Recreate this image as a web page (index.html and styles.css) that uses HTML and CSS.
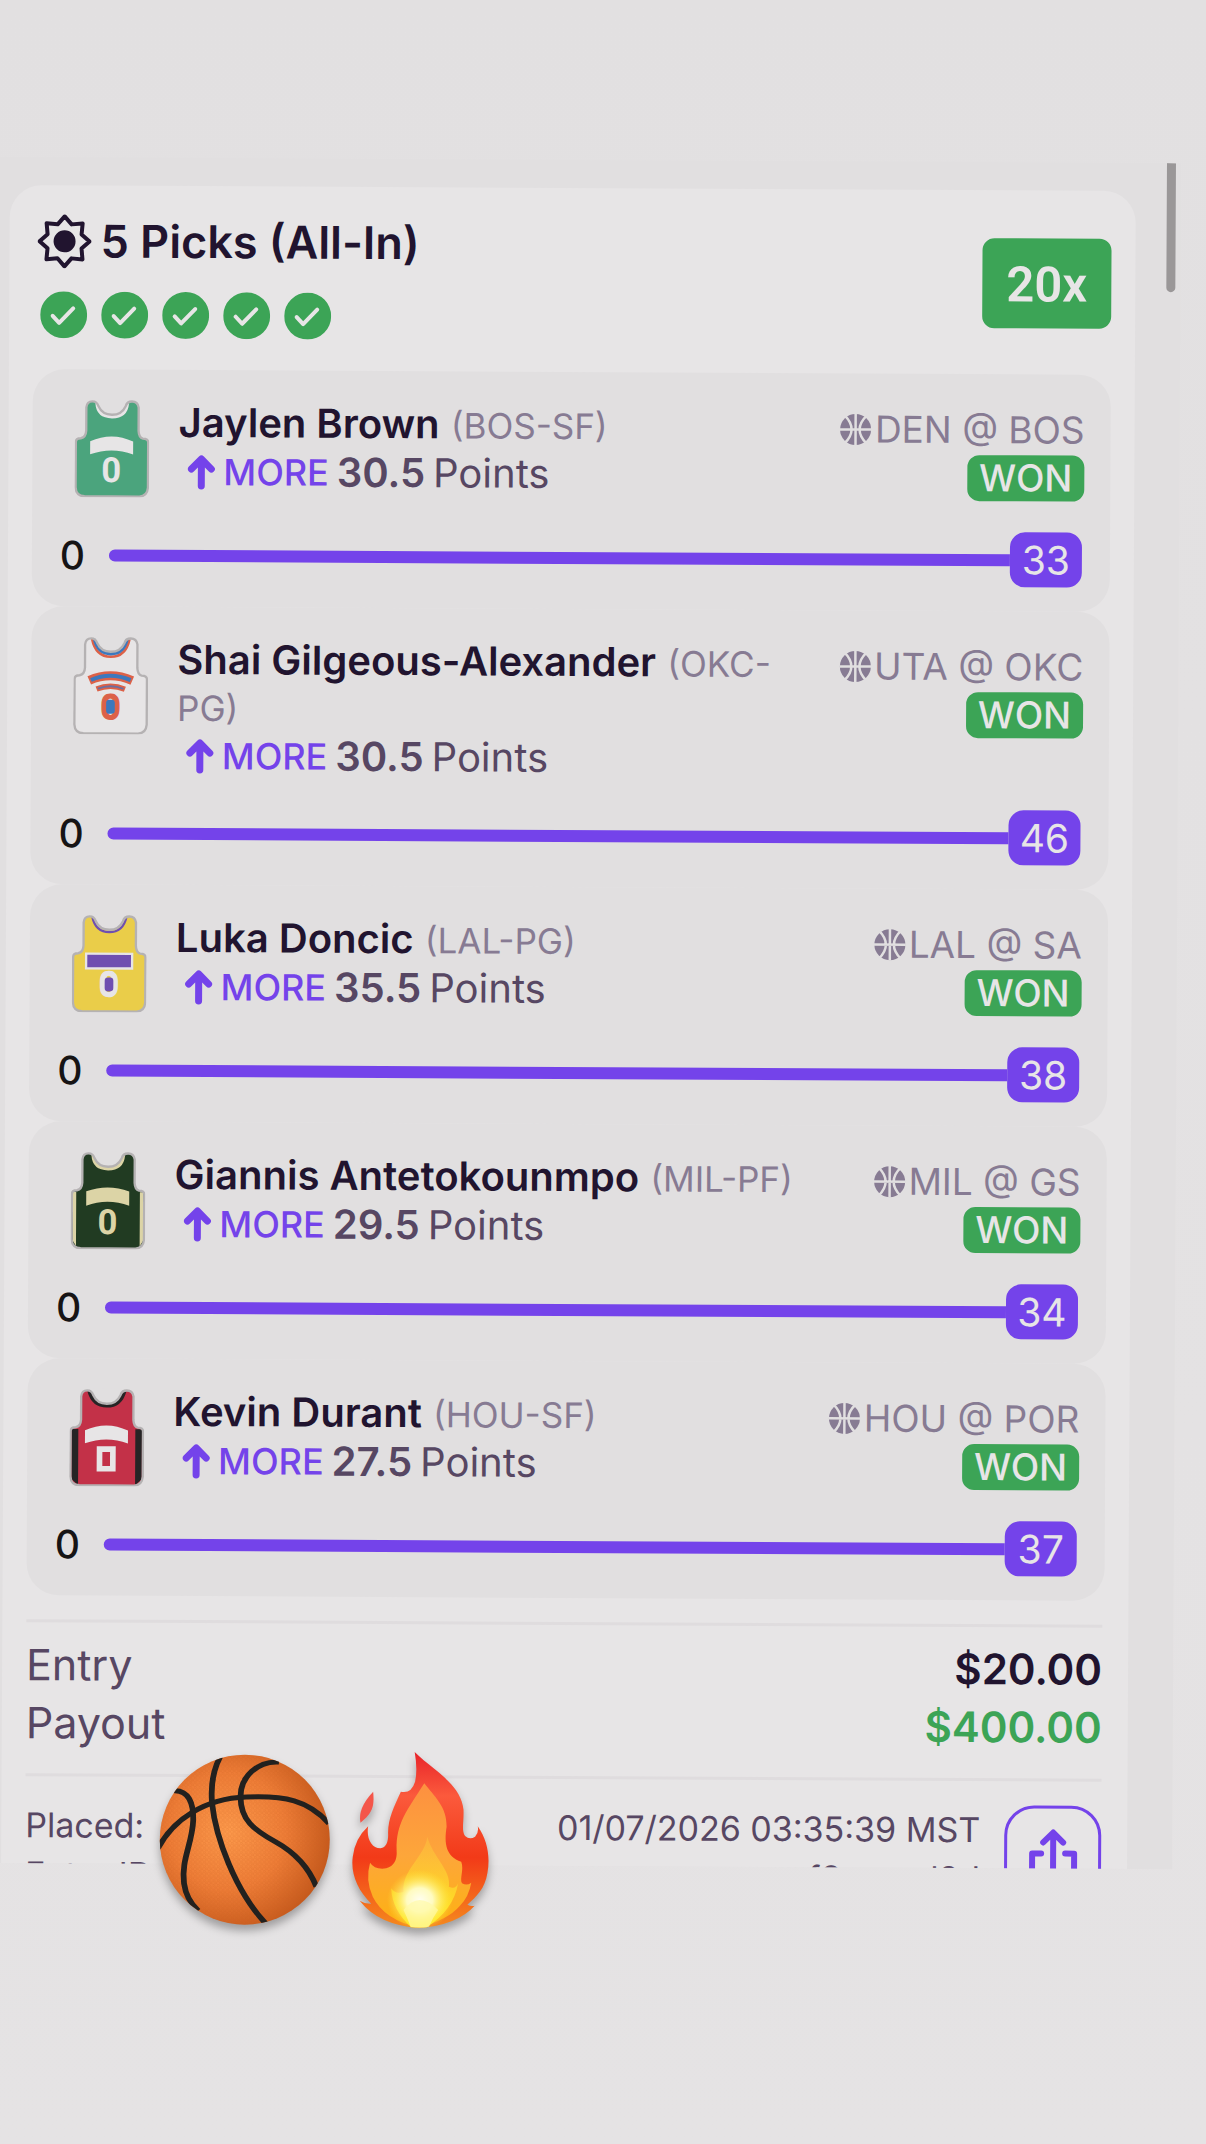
FILE: index.html
```html
<!DOCTYPE html>
<html lang="en">
<head>
  <meta charset="UTF-8">
  <meta name="viewport" content="width=device-width, initial-scale=1.0">
  <title>5 Picks (All-In)</title>
  <link rel="stylesheet" href="styles.css">
</head>
<body>
  <!-- shared icons -->
  <svg class="defs" aria-hidden="true">
    <symbol id="check" viewBox="0 0 47 47">
      <circle cx="23.5" cy="23.5" r="23.5" fill="#3ca456"/>
      <path d="M12.5 24.5l6.5 7L33 17" fill="none" stroke="#e7e5e6" stroke-width="4" stroke-linecap="round" stroke-linejoin="round"/>
    </symbol>
    <symbol id="ball" viewBox="0 0 32 32">
      <circle cx="16" cy="16" r="15.5" fill="#877b93"/>
      <path d="M16 0v32M0 16h32M5 2Q12 9 12 16T5 30M27 2Q20 9 20 16T27 30" fill="none" stroke="#e1dfe0" stroke-width="2.5"/>
    </symbol>
    <symbol id="up" viewBox="0 0 28 36">
      <path d="M14 32V6M4 15L14 5l10 10" fill="none" stroke="#7443ea" stroke-width="7" stroke-linecap="round" stroke-linejoin="round"/>
    </symbol>
    <symbol id="shirt" viewBox="45 57 225 293">
      <path d="M80 80Q82 62 98 62Q112 62 116 76Q128 102 157 102Q186 102 198 76Q202 62 217 62Q234 62 237 80V150Q238 170 250 173Q266 173 266 184V320Q264 346 240 347H76Q50 346 49 320V184Q49 173 64 173Q79 170 80 150Z"/>
    </symbol>
  </svg>

  <main class="frame">
    <article class="slip">
      <header class="slip-header">
        <div>
          <h1 class="title">
            <svg class="star" viewBox="-27 -27 54 54"><path d="M0-25L7-17L18-18L17-7L25 0L17 7L18 18L7 17L0 25L-7 17L-18 18L-17 7L-25 0L-17-7L-18-18L-7-17Z" fill="none" stroke="#21142f" stroke-width="4" stroke-linejoin="round"/><circle r="11" fill="#21142f"/></svg>
            5 Picks (All-In)
          </h1>
          <div class="checks">
            <svg><use href="#check"/></svg>
            <svg><use href="#check"/></svg>
            <svg><use href="#check"/></svg>
            <svg><use href="#check"/></svg>
            <svg><use href="#check"/></svg>
          </div>
        </div>
        <span class="multiplier">20x</span>
      </header>

      <section class="picks">
        <div class="pick">
          <div class="pick-top">
            <svg class="jersey" viewBox="45 57 225 293">
              <use href="#shirt" x="45" y="57" width="225" height="293" fill="#4ba47d"/>
              <path d="M107 68Q110 113 157 113Q204 113 208 68L198 64V76L157 102L116 76V64Z" fill="#e7e5e6"/>
              <path d="M92 182Q157 152 221 182V221Q157 197 92 221Z" fill="#e7e5e6"/>
              <text x="156" y="304" fill="#e7e5e6">0</text>
              <path class="neck" d="M112 62Q118 102 157 102T202 62V50H112Z"/>
              <use class="outline" href="#shirt" x="45" y="57" width="225" height="293"/>
            </svg>
            <div class="player">
              <p><b class="name">Jaylen Brown</b> <span class="team">(BOS-SF)</span></p>
              <p class="line"><svg class="arrow"><use href="#up"/></svg><span class="more">MORE</span> <b>30.5</b> Points</p>
            </div>
            <div class="game">
              <p><svg class="ball"><use href="#ball"/></svg>DEN @ BOS</p>
              <span class="won">WON</span>
            </div>
          </div>
          <div class="progress"><span class="zero">0</span><span class="track"></span><span class="score">33</span></div>
        </div>

        <div class="pick">
          <div class="pick-top">
            <svg class="jersey" viewBox="45 57 225 293">
              <use href="#shirt" x="45" y="57" width="225" height="293" fill="#e7e5e6"/>
              <path d="M101 64Q112 117 157 117T213 64" fill="none" stroke="#dc6148" stroke-width="8"/>
              <path d="M108 64Q118 108 157 108T206 64" fill="none" stroke="#3c78bd" stroke-width="10"/>
              <path d="M93 188Q157 160 222 188" fill="none" stroke="#dc6148" stroke-width="27"/>
              <path d="M98 187Q157 161 217 187" fill="none" stroke="#3c78bd" stroke-width="12"/>
              <path d="M115 214Q157 197 200 214" fill="none" stroke="#dc6148" stroke-width="16"/>
              <path d="M119 213Q157 198 196 213" fill="none" stroke="#6d6ea0" stroke-width="6"/>
              <text x="157" y="304" fill="#dc6148" stroke="#dc6148" stroke-width="4">0</text>
              <rect x="144" y="246" width="26" height="42" rx="10" fill="#3c78bd"/>
              <path class="neck" d="M112 62Q118 102 157 102T202 62V50H112Z"/>
              <use class="outline" href="#shirt" x="45" y="57" width="225" height="293"/>
            </svg>
            <div class="player">
              <p><b class="name">Shai Gilgeous-Alexander</b> <span class="team">(OKC-PG)</span></p>
              <p class="line"><svg class="arrow"><use href="#up"/></svg><span class="more">MORE</span> <b>30.5</b> Points</p>
            </div>
            <div class="game">
              <p><svg class="ball"><use href="#ball"/></svg>UTA @ OKC</p>
              <span class="won">WON</span>
            </div>
          </div>
          <div class="progress"><span class="zero">0</span><span class="track"></span><span class="score">46</span></div>
        </div>

        <div class="pick">
          <div class="pick-top">
            <svg class="jersey" viewBox="45 57 225 293">
              <use href="#shirt" x="45" y="57" width="225" height="293" fill="#eacd49"/>
              <path d="M106 64Q116 109 157 109T208 64" fill="none" stroke="#6f4fb0" stroke-width="7"/>
              <rect x="88" y="174" width="138" height="44" fill="#6f4fb0" stroke="#e7e5e6" stroke-width="7"/>
              <text x="157" y="302" fill="#e7e5e6" stroke="#e7e5e6" stroke-width="4">0</text>
              <rect x="144" y="245" width="26" height="42" rx="10" fill="#6f4fb0"/>
              <path class="neck" d="M112 62Q118 102 157 102T202 62V50H112Z"/>
              <use class="outline" href="#shirt" x="45" y="57" width="225" height="293"/>
            </svg>
            <div class="player">
              <p><b class="name">Luka Doncic</b> <span class="team">(LAL-PG)</span></p>
              <p class="line"><svg class="arrow"><use href="#up"/></svg><span class="more">MORE</span> <b>35.5</b> Points</p>
            </div>
            <div class="game">
              <p><svg class="ball"><use href="#ball"/></svg>LAL @ SA</p>
              <span class="won">WON</span>
            </div>
          </div>
          <div class="progress"><span class="zero">0</span><span class="track"></span><span class="score">38</span></div>
        </div>

        <div class="pick">
          <div class="pick-top">
            <svg class="jersey" viewBox="45 57 225 293">
              <use href="#shirt" x="45" y="57" width="225" height="293" fill="#213b22"/>
              <path d="M52 178h10v162l-10-16ZM263 178h-10v162l10-16Z" fill="#dcd4a6"/>
              <path d="M107 68Q110 113 157 113Q204 113 208 68L198 64V76L157 102L116 76V64Z" fill="#dcd4a6"/>
              <path d="M92 176Q157 152 221 176V219Q157 195 92 219Z" fill="#dcd4a6"/>
              <text x="156" y="304" fill="#dcd4a6">0</text>
              <path class="neck" d="M112 62Q118 102 157 102T202 62V50H112Z"/>
              <use class="outline" href="#shirt" x="45" y="57" width="225" height="293"/>
            </svg>
            <div class="player">
              <p><b class="name">Giannis Antetokounmpo</b> <span class="team">(MIL-PF)</span></p>
              <p class="line"><svg class="arrow"><use href="#up"/></svg><span class="more">MORE</span> <b>29.5</b> Points</p>
            </div>
            <div class="game">
              <p><svg class="ball"><use href="#ball"/></svg>MIL @ GS</p>
              <span class="won">WON</span>
            </div>
          </div>
          <div class="progress"><span class="zero">0</span><span class="track"></span><span class="score">34</span></div>
        </div>

        <div class="pick">
          <div class="pick-top">
            <svg class="jersey" viewBox="45 57 225 293">
              <use href="#shirt" x="45" y="57" width="225" height="293" fill="#c33148"/>
              <path d="M52 178h20v168l-20-18ZM263 178h-20v168l20-18Z" fill="#262425"/>
              <path d="M104 64Q116 108 157 108T210 64" fill="none" stroke="#262425" stroke-width="11"/>
              <path d="M92 182Q157 152 221 182V221Q157 197 92 221Z" fill="#e7e5e6"/>
              <rect x="136" y="238" width="40" height="59" fill="none" stroke="#e7e5e6" stroke-width="17"/>
              <path class="neck" d="M112 62Q118 102 157 102T202 62V50H112Z"/>
              <use class="outline" href="#shirt" x="45" y="57" width="225" height="293"/>
            </svg>
            <div class="player">
              <p><b class="name">Kevin Durant</b> <span class="team">(HOU-SF)</span></p>
              <p class="line"><svg class="arrow"><use href="#up"/></svg><span class="more">MORE</span> <b>27.5</b> Points</p>
            </div>
            <div class="game">
              <p><svg class="ball"><use href="#ball"/></svg>HOU @ POR</p>
              <span class="won">WON</span>
            </div>
          </div>
          <div class="progress"><span class="zero">0</span><span class="track"></span><span class="score">37</span></div>
        </div>
      </section>

      <dl class="totals">
        <div><dt>Entry</dt><dd>$20.00</dd></div>
        <div><dt>Payout</dt><dd class="win">$400.00</dd></div>
      </dl>

      <footer class="meta">
        <dl>
          <div><dt>Placed:</dt><dd>01/07/2026 03:35:39 MST</dd></div>
          <div><dt>Entry ID:</dt><dd>xzqvf8rcwml2d</dd></div>
        </dl>
        <button class="share" aria-label="Share">
          <svg viewBox="0 0 50 58"><path d="M25 44V5M15 14L25 4l10 10M13 25H4v27h42V25h-9" fill="none" stroke="#7443ea" stroke-width="6" stroke-linecap="round" stroke-linejoin="round"/></svg>
        </button>
      </footer>
    </article>
    <div class="scrollbar"></div>
  </main>

  <div class="stickers">
    <svg class="sticker-ball" viewBox="400 480 468 540" preserveAspectRatio="none">
      <defs>
        <radialGradient id="leather" cx=".4" cy=".45" r=".62">
          <stop offset="0" stop-color="#fd9a4c"/>
          <stop offset=".55" stop-color="#ee7d37"/>
          <stop offset="1" stop-color="#c4581b"/>
        </radialGradient>
        <pattern id="grain" width="12" height="14" patternUnits="userSpaceOnUse">
          <circle cx="3" cy="4" r="3" fill="none" stroke="#c65a1c" stroke-width="1.5"/>
          <circle cx="9" cy="11" r="3" fill="none" stroke="#c65a1c" stroke-width="1.5"/>
        </pattern>
        <clipPath id="round"><ellipse cx="636" cy="749" rx="221" ry="255"/></clipPath>
      </defs>
      <ellipse cx="636" cy="749" rx="221" ry="255" fill="url(#leather)"/>
      <ellipse cx="636" cy="749" rx="221" ry="255" fill="url(#grain)" opacity=".35"/>
      <g clip-path="url(#round)" fill="none" stroke="#22211f" stroke-width="15">
        <path d="M572 500Q545 560 551 640C560 740 610 900 690 1000"/>
        <path d="M725 516C670 512 625 560 625 620C625 690 660 720 715 755C770 790 805 840 822 890"/>
        <path d="M452 602C490 600 503 640 502 690C500 760 470 810 478 880Q484 930 515 962"/>
        <path d="M410 775C450 690 530 625 640 621C740 616 800 630 855 700"/>
      </g>
    </svg>
    <svg class="sticker-fire" viewBox="903 480 390 570" preserveAspectRatio="none">
      <defs>
        <linearGradient id="red" x1="0" y1="0" x2="0" y2="1">
          <stop offset="0" stop-color="#e8232a"/>
          <stop offset=".25" stop-color="#fb5a3c"/>
          <stop offset=".6" stop-color="#f23a18"/>
          <stop offset="1" stop-color="#f58a1e"/>
        </linearGradient>
        <linearGradient id="orange" x1="0" y1="0" x2="0" y2="1">
          <stop offset="0" stop-color="#fd9040"/>
          <stop offset=".5" stop-color="#fda63a"/>
          <stop offset="1" stop-color="#fdb211"/>
        </linearGradient>
        <linearGradient id="yellow" x1="0" y1="0" x2="0" y2="1">
          <stop offset="0" stop-color="#fdc040" stop-opacity=".5"/>
          <stop offset="1" stop-color="#ffec1e"/>
        </linearGradient>
        <radialGradient id="glow">
          <stop offset="0" stop-color="#fffef0"/>
          <stop offset=".4" stop-color="#fffbc0"/>
          <stop offset="1" stop-color="#ffee30" stop-opacity="0"/>
        </radialGradient>
      </defs>
      <path d="M1079 486C1120 535 1200 580 1206 660C1207 700 1200 720 1210 738Q1222 750 1236 740Q1246 728 1243 709C1268 750 1276 800 1268 850C1262 895 1240 920 1216 944Q1226 950 1235 947Q1190 1005 1090 1014Q985 1005 936 932Q950 942 966 941C930 900 912 850 918 800Q924 745 958 709C953 745 966 775 990 775C1005 773 1010 755 1010 735C1008 690 1025 650 1043 605Q1070 612 1080 575Q1087 540 1079 486Z" fill="url(#red)"/>
      <path d="M971 605C975 650 968 670 938 698Q930 655 971 605Z" fill="#f4564a"/>
      <path d="M1104 580C1130 620 1163 650 1162 710C1155 760 1160 800 1200 815C1208 840 1195 865 1202 880Q1215 888 1226 878Q1220 920 1196 948Q1165 990 1090 1012Q1000 990 970 920Q950 870 963 818Q975 840 1005 835Q1035 825 1032 780C1030 700 1060 660 1104 580Z" fill="url(#orange)"/>
      <path d="M1112 740C1125 800 1175 840 1168 890Q1185 900 1192 880Q1180 960 1110 1012H1070Q1020 960 1018 895Q1030 915 1050 905C1045 840 1105 800 1112 740Z" fill="url(#yellow)"/>
      <ellipse cx="1092" cy="930" rx="85" ry="90" fill="url(#glow)"/>
      <path d="M1068 1010Q1062 990 1050 960Q1090 900 1140 960Q1125 985 1116 1010Q1092 1016 1068 1010Z" fill="#fff9a8" opacity=".7"/>
    </svg>
  </div>
</body>
</html>
```
FILE: styles.css
```css
* {
  box-sizing: border-box;
}
body {
  margin: 0;
  height: 100vh;
  padding: 157px 25px 281px 0;
  display: flex;
  flex-direction: column;
  position: relative;
  overflow: hidden;
  font-family: Inter, "Liberation Sans", sans-serif;
  background: linear-gradient(#e2e0e1, #e5e3e4);
  color: #574763;
}
h1, p, dl, dd {
  margin: 0;
}
svg {
  display: block;
  flex: none;
}
b {
  font-weight: 600;
}
.defs {
  position: absolute;
  width: 0;
  height: 0;
}

/* tilted sheet */
.frame {
  flex: 1;
  min-height: 0;
  overflow: hidden;
  position: relative;
  padding: 28px 45px 0 10px;
  background-color: #e1dfe0;
  transform: rotate(0.3deg);
  transform-origin: 0 0;
}
.slip {
  padding: 24px 24px 60px;
  background-color: #e7e5e6;
  border-radius: 32px;
}
.scrollbar {
  position: absolute;
  top: 0;
  right: 5px;
  width: 9px;
  height: 129px;
  background-color: #9a9798;
  border-radius: 0 0 5px 5px;
}

.slip-header {
  display: flex;
  justify-content: space-between;
  align-items: flex-start;
  height: 160px;
}
.title {
  display: flex;
  align-items: center;
  gap: 9px;
  padding-left: 4px;
  font-size: 45px;
  line-height: 64px;
  font-weight: 600;
  color: #21142f;
}
.star {
  width: 54px;
  height: 54px;
}
.checks {
  display: flex;
  gap: 14px;
  padding: 18px 0 0 7px;
}
.checks svg {
  width: 47px;
  height: 47px;
}
.multiplier {
  margin-top: 24px;
  width: 129px;
  padding-top: 4px;
  border-radius: 12px;
  background-color: #3ca456;
  color: #e7e5e6;
  font-family: Roboto, sans-serif;
  font-size: 49px;
  font-weight: 600;
  line-height: 86px;
  text-align: center;
}

.pick {
  padding: 30px 26px 24px 28px;
  background-color: #e1dfe0;
  border-radius: 32px;
}
.pick-top {
  display: flex;
  min-height: 101px;
}
.jersey {
  width: 75px;
  height: 98px;
  margin: 0 29px 0 14px;
}
.jersey text {
  font-family: Roboto, sans-serif;
  font-size: 104px;
  font-weight: 700;
  text-anchor: middle;
}
.neck {
  fill: #e1dfe0;
}
.outline {
  fill: none;
  stroke: #b5b2b3;
  stroke-width: 7px;
}
.player {
  flex: 1;
  padding-right: 24px;
  font-size: 40px;
  line-height: 46px;
}
.name {
  color: #21142f;
}
.team {
  font-size: 35px;
  color: #877b93;
}
.line {
  display: flex;
  align-items: center;
  gap: 8px;
  padding: 2px 0 0 9px;
}
.arrow {
  width: 28px;
  height: 36px;
}
.more {
  font-size: 36px;
  font-weight: 500;
  color: #7443ea;
}
.game {
  display: flex;
  flex-direction: column;
  align-items: flex-end;
  font-size: 37px;
  line-height: 51px;
  color: #877b93;
}
.game p {
  display: flex;
  align-items: center;
  gap: 3px;
}
.ball {
  width: 32px;
  height: 32px;
}
.won {
  padding: 0 12px;
  border-radius: 12px;
  background-color: #3ca456;
  color: #e7e5e6;
  font-size: 37px;
  font-weight: 500;
  line-height: 46px;
}
.progress {
  display: flex;
  align-items: center;
  margin: 27px 2px 0 0;
}
.zero {
  width: 49px;
  font-size: 39px;
  font-weight: 500;
  color: #161415;
}
.track {
  flex: 1;
  height: 12px;
  border-radius: 6px 0 0 6px;
  background-color: #7443ea;
}
.score {
  width: 72px;
  border-radius: 15px;
  background-color: #7443ea;
  color: #e7e5e6;
  font-size: 39px;
  line-height: 55px;
  text-align: center;
}

.totals, .meta {
  margin-right: 2px;
}
.totals {
  margin-top: 24px;
  padding: 13px 0 22px;
  border: solid #dfdcde;
  border-width: 3px 0;
  font-size: 43px;
  line-height: 58px;
}
.totals div, .meta dl div {
  display: flex;
  justify-content: space-between;
}
.totals dd {
  font-size: 42px;
  font-weight: 600;
  color: #21142f;
}
.totals .win {
  color: #3ca456;
}
.meta {
  display: flex;
  gap: 24px;
  padding-top: 24px;
}
.meta dl {
  flex: 1;
  font-size: 34px;
  line-height: 49px;
}
.share {
  width: 97px;
  height: 97px;
  padding: 20px 0 0;
  display: flex;
  justify-content: center;
  border: 3px solid #7443ea;
  border-radius: 30px;
  background: none;
}
.share svg {
  width: 50px;
  height: 58px;
}

.stickers {
  position: absolute;
  left: 154px;
  bottom: 204px;
  display: flex;
  gap: 13px;
  filter: drop-shadow(0 6px 4px rgba(0, 0, 0, 0.3));
}
.sticker-ball {
  width: 180px;
  height: 180px;
}
.sticker-fire {
  width: 150px;
  height: 190px;
}
```
